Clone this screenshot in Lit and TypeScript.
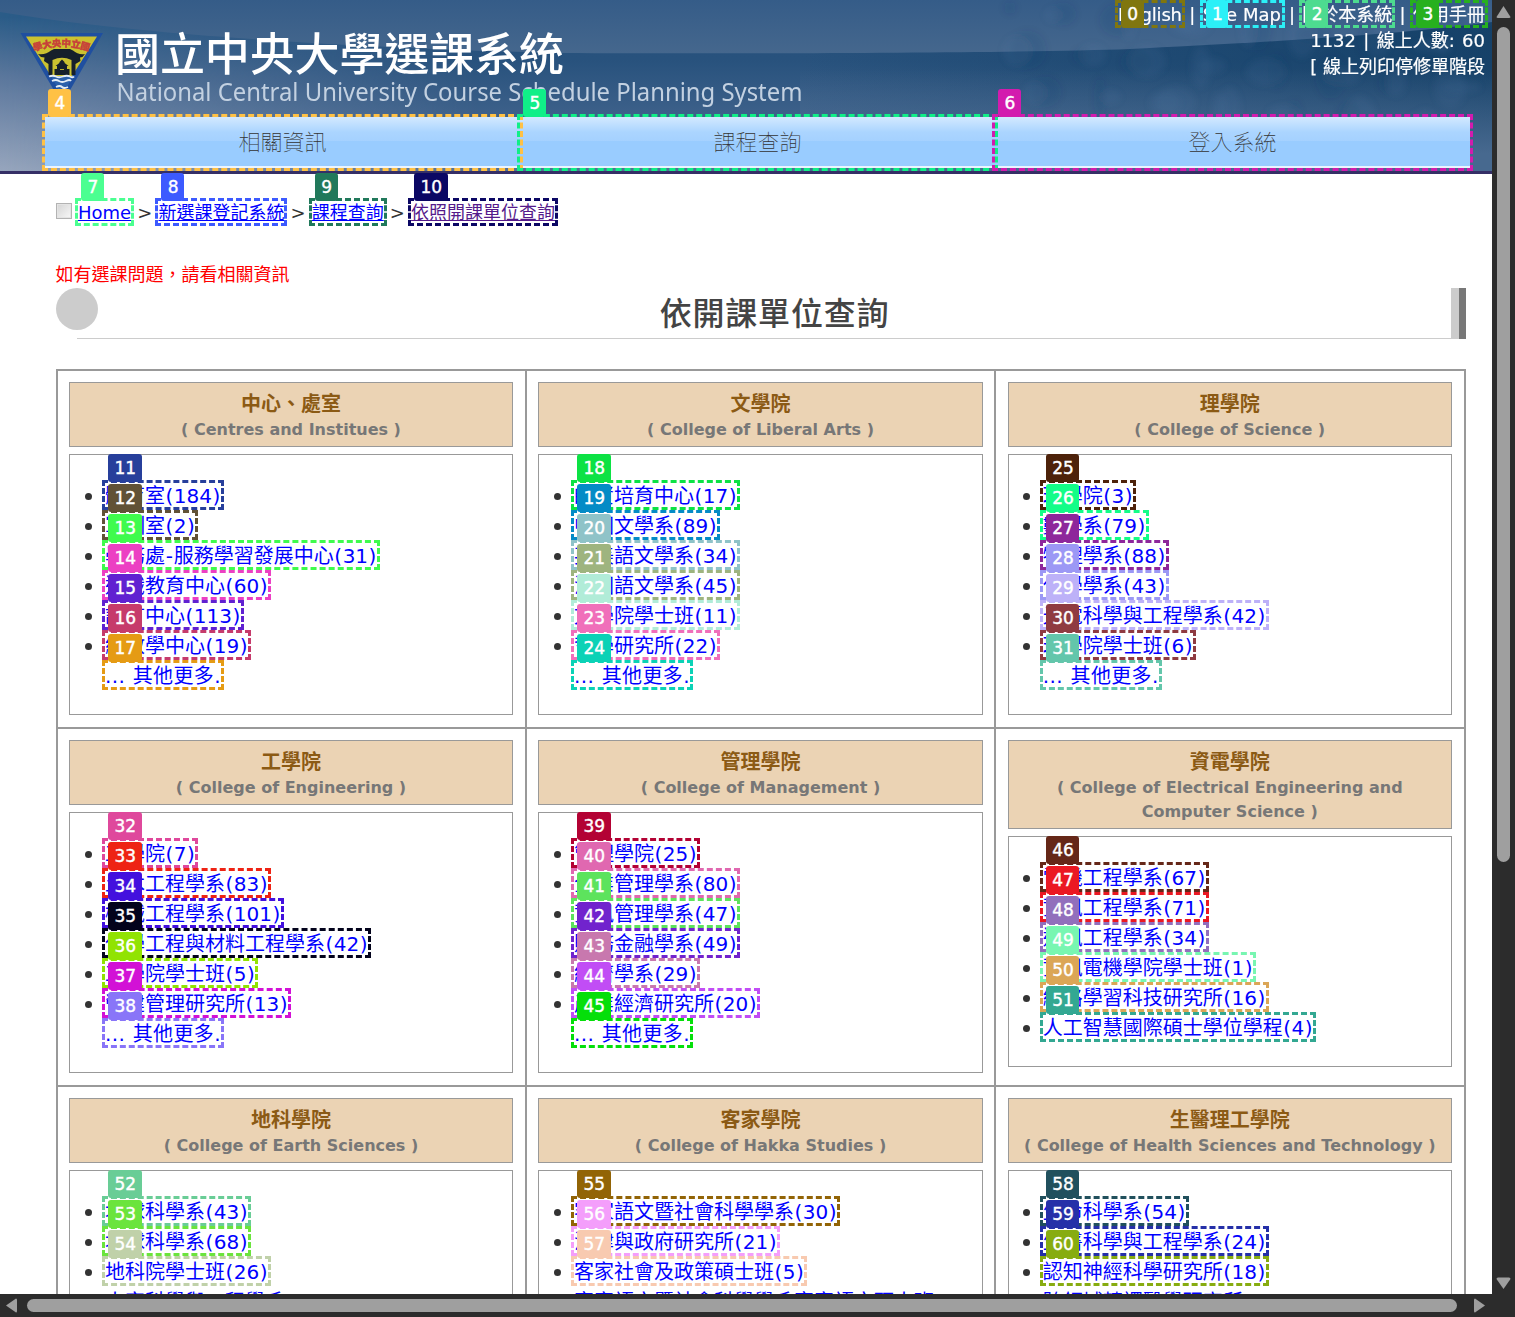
import { LitElement, html, svg, css, nothing } from "lit";
import { customElement, property } from "lit/decorators.js";

interface Entry { name: string; count?: number; color?: string; tag?: number }
interface College { zh: string; en: string; items: Entry[] }

const MORE = "... 其他更多.";

function build(zh: string, en: string, first: number, rows: [string, number | null, string?][]): College {
  return {
    zh,
    en,
    items: rows.map(([name, count, color], i) => ({
      name,
      count: count ?? undefined,
      color,
      tag: color ? first + i : undefined,
    })),
  };
}

const COLLEGES: College[] = [
  build("中心、處室", "( Centres and Institues )", 11, [
    ["體育室", 184, "#273f9b"], ["軍訓室", 2, "#615236"], ["學務處-服務學習發展中心", 31, "#3ffb4d"],
    ["通識教育中心", 60, "#ec40c3"], ["語言中心", 113, "#6021d1"], ["總教學中心", 19, "#c63b6b"], [MORE, null, "#e59b14"],
  ]),
  build("文學院", "( College of Liberal Arts )", 18, [
    ["師資培育中心", 17, "#0ce244"], ["中國文學系", 89, "#048bc6"], ["英美語文學系", 34, "#8fc3c8"],
    ["法國語文學系", 45, "#9eb47f"], ["文學院學士班", 11, "#b1ecd8"], ["哲學研究所", 22, "#f06fba"], [MORE, null, "#0bd2b6"],
  ]),
  build("理學院", "( College of Science )", 25, [
    ["理學院", 3, "#4d220a"], ["數學系", 79, "#13fd88"], ["物理學系", 88, "#8e279b"],
    ["化學學系", 43, "#9c98f5"], ["光電科學與工程學系", 42, "#bdb1f8"], ["理學院學士班", 6, "#8f3b41"], [MORE, null, "#63c6ab"],
  ]),
  build("工學院", "( College of Engineering )", 32, [
    ["工學院", 7, "#df489c"], ["土木工程學系", 83, "#ee2314"], ["機械工程學系", 101, "#4310de"],
    ["化學工程與材料工程學系", 42, "#03031c"], ["工學院學士班", 5, "#91e302"], ["營建管理研究所", 13, "#d211d6"], [MORE, null, "#8975f8"],
  ]),
  build("管理學院", "( College of Management )", 39, [
    ["管理學院", 25, "#b30234"], ["企業管理學系", 80, "#e068b0"], ["資訊管理學系", 47, "#5de35d"],
    ["財務金融學系", 49, "#7123cd"], ["經濟學系", 29, "#c878ae"], ["產業經濟研究所", 20, "#c14df5"], [MORE, null, "#05df0a"],
  ]),
  build("資電學院", "( College of Electrical Engineering and Computer Science )", 46, [
    ["電機工程學系", 67, "#652718"], ["資訊工程學系", 71, "#eb1822"], ["通訊工程學系", 34, "#926fbc"],
    ["資訊電機學院學士班", 1, "#78f6b1"], ["網路學習科技研究所", 16, "#dba656"], ["人工智慧國際碩士學位學程", 4, "#33a892"],
  ]),
  build("地科學院", "( College of Earth Sciences )", 52, [
    ["地球科學系", 43, "#69cd96"], ["地球科學系", 68, "#6be43d"], ["地科院學士班", 26, "#c0d1a9"], ["太空科學與工程學系", 31],
  ]),
  build("客家學院", "( College of Hakka Studies )", 55, [
    ["客家語文暨社會科學學系", 30, "#926406"], ["法律與政府研究所", 21, "#f49efb"], ["客家社會及政策碩士班", 5, "#f8cab0"],
    ["客家語文暨社會科學學系客家語文碩士班", 6],
  ]),
  build("生醫理工學院", "( College of Health Sciences and Technology )", 58, [
    ["生命科學系", 54, "#21505d"], ["生醫科學與工程學系", 24, "#2530a8"], ["認知神經科學研究所", 18, "#87ac10"], ["跨領域轉譯醫學研究所", 4],
  ]),
];

@customElement("marked-link")
class MarkedLink extends LitElement {
  @property() color = "";
  @property() tag = "";

  static styles = css`
    :host { display: inline-block; position: relative; white-space: nowrap; }
    .frame { position: absolute; z-index: 1; inset: -3px; border: 3px dashed; pointer-events: none; }
    .tag {
      position: absolute; z-index: 1; left: 3px; top: var(--tag-top, -29px); height: 28px; padding: 0 5.600px 0 6.400px; box-sizing: border-box;
      border-radius: 3px; color: #fff; font: 17px/28px "DejaVu Sans", sans-serif; -webkit-text-stroke: 0.4px #fff;
    }
  `;

  render() {
    return html`<slot></slot>${this.color
      ? html`<span class="frame" style="border-color:${this.color}"></span><span class="tag" style="background:${this.color}">${this.tag}</span>`
      : nothing}`;
  }
}

@customElement("site-banner")
class SiteBanner extends LitElement {
  static styles = css`
    :host { display: block; position: relative; height: 171px; border-bottom: 3px solid #352f66; overflow: visible; }
    .sky { position: absolute; inset: 0; width: 100%; height: 171px; }
    .layout { position: relative; height: 171px; display: flex; flex-direction: column; }
    .top { height: 117px; display: flex; justify-content: space-between; }
    .brand { width: 830px; height: 117px; flex: none; }
    .meta { padding-right: 7px; color: #fff; font-size: 18px; line-height: 26px; text-align: right; -webkit-text-stroke: 0.2px #fff; }
    .links { display: flex; justify-content: flex-end; align-items: flex-start; height: 28px; box-sizing: border-box; padding-top: 3px; line-height: 23px; --tag-top: -3px; }
    .links marked-link { height: 22px; }
    .sep { width: 20.700px; text-align: center; }
    .en { width: 64px; text-align: left; letter-spacing: -0.15px; }
    .map { width: 79px; text-align: left; }
    .nav { display: grid; grid-template-columns: repeat(3, 475px); margin-left: 45px; height: 51px; --tag-top: -28px; }
    .tab {
      height: 51px; display: flex; align-items: center; justify-content: center; box-sizing: border-box;
      font: 100 22px "Noto Sans CJK TC", sans-serif; color: #333; border-bottom: 2px solid #eaf4ff;
      background: linear-gradient(#d3e9ff, #abd5ff 15px, #a5d1ff 24px, #99ccff 24px, #99ccff);
    }
    .tab span { padding-bottom: 4px; }
    .info { display: block; height: 26px; white-space: nowrap; }
    .count { word-spacing: 1.600px; }
  `;

  sky() {
    const leaves = Array.from({ length: 46 }, (_, i) => {
      const x = 1010 + ((i * 83) % 480);
      const y = 8 + ((i * 47) % 120);
      return svg`<ellipse cx=${x} cy=${y} rx=${6 + ((i * 7) % 15)} ry=${6 + ((i * 5) % 17)} fill=${i % 3 ? "#5a83ae" : "#173f63"} opacity="0.11" />`;
    });
    return html`<svg class="sky" viewBox="0 0 1492 171" preserveAspectRatio="none" aria-hidden="true">
      <defs>
        <linearGradient id="base" x1="0" y1="0" x2="0" y2="1">
          <stop offset="0" stop-color="#24507c" /><stop offset="0.35" stop-color="#28527d" /><stop offset="1" stop-color="#526f97" />
        </linearGradient>
        <linearGradient id="cap" x1="0" y1="0" x2="0" y2="1">
          <stop offset="0" stop-color="#355c88" /><stop offset="1" stop-color="#45678d" />
        </linearGradient>
        <linearGradient id="left" x1="0" y1="0" x2="0" y2="1">
          <stop offset="0.1" stop-color="#2b5c88" /><stop offset="0.45" stop-color="#5b779c" /><stop offset="1" stop-color="#97a6bd" />
        </linearGradient>
        <linearGradient id="fade" x1="0" y1="0" x2="1" y2="0">
          <stop offset="0" stop-color="#fff" /><stop offset="1" stop-color="#000" />
        </linearGradient>
        <linearGradient id="dark" x1="0" y1="0" x2="1" y2="0">
          <stop offset="0" stop-color="#103c62" stop-opacity="0" /><stop offset="1" stop-color="#103c62" stop-opacity="0.75" />
        </linearGradient>
        <linearGradient id="lift" x1="0" y1="0" x2="0" y2="1">
          <stop offset="0.4" stop-color="#47698f" stop-opacity="0" /><stop offset="0.9" stop-color="#47698f" />
        </linearGradient>
        <mask id="m"><rect width="480" height="171" fill="url(#fade)" /></mask>
        <filter id="b"><feGaussianBlur stdDeviation="3" /></filter>
      </defs>
      <rect width="1492" height="171" fill="url(#base)" />
      <rect width="480" height="171" fill="url(#left)" mask="url(#m)" />
      <rect x="800" width="692" height="171" fill="url(#dark)" />
      <rect x="800" width="692" height="171" fill="url(#lift)" />
      <path d="M0 0H1492V22C1390 36 1230 44 1130 49C1020 53 760 54 560 53C350 48 130 34 0 12Z" fill="url(#cap)" />
      <g filter="url(#b)">${leaves}</g>
    </svg>`;
  }

  brand() {
    return html`<svg class="brand" viewBox="0 0 830 117">
      <defs><path id="arc" d="M34 51.500Q62 42 90 51.500" /></defs>
      <path d="M20.500 33H103L62 104Z" fill="#1f4fa0" />
      <path d="M26 36.500H97L72 76H51Z" fill="#cbc230" />
      <path d="M51 76H73L62 96Z" fill="#2c61ab" />
      <text font-size="9.500" font-weight="900" fill="#c7403a" stroke="#c7403a" stroke-width="0.400" font-family="Noto Sans CJK TC, sans-serif"><textPath href="#arc" textLength="56">學大央中立國</textPath></text>
      <path d="M38 54Q46 55 51 50.500L54 49H70L73 50.500Q78 55 85 54L82.500 57L80 57.500L80.500 61L75.500 64V75H71.500V60Q62 55.500 52.500 60V75H48.500V64L44 61L44.500 57.500L41 57Z" fill="#16202b" />
      <path d="M62 59.500L65 62.500H64L68.500 66H67V69H69.500V75H54.500V69H57V66H55.500L60 62.500H59Z" fill="#16202b" />
      <path d="M60 69.500h4" stroke="#cbc230" stroke-width="0.900" />
      <path d="M49 76.500q4-1.500 7 0t7 0 7 0 4 0M52 81q4-2 7 0t7 0 5 0M56 87q4-2 6 0t6 0" fill="none" stroke="#e5edf6" stroke-width="1.800" />
      <text x="115" y="71" textLength="449" font-size="45" font-weight="500" fill="#fff" font-family="Noto Sans CJK TC, sans-serif">國立中央大學選課系統</text>
      <text x="116.500" y="101" textLength="686" font-size="25" fill="#c3d1e1" lengthAdjust="spacingAndGlyphs" font-family="Noto Sans, sans-serif">National Central University Course Schedule Planning System</text>
    </svg>`;
  }

  render() {
    return html`${this.sky()}
      <div class="layout">
        <div class="top">
          ${this.brand()}
          <div class="meta">
            <div class="links">
              <marked-link class="en" color="#80760f" tag="0">English</marked-link><span class="sep">|</span>
              <marked-link class="map" color="#2bf0f7" tag="1">Site Map</marked-link><span class="sep">|</span>
              <marked-link color="#4ddb90" tag="2">關於本系統</marked-link><span class="sep">|</span>
              <marked-link color="#27b01f" tag="3">使用手冊</marked-link>
            </div>
            <span class="info count">1132 | 線上人數: 60</span>
            <span class="info">[ 線上列印停修單階段</span>
          </div>
        </div>
        <div class="nav">
          <marked-link color="#ffc145" tag="4"><div class="tab"><span>相關資訊</span></div></marked-link>
          <marked-link color="#10ef88" tag="5"><div class="tab"><span>課程查詢</span></div></marked-link>
          <marked-link color="#d31bae" tag="6"><div class="tab"><span>登入系統</span></div></marked-link>
        </div>
      </div>`;
  }
}

@customElement("college-card")
class CollegeCard extends LitElement {
  @property({ attribute: false }) data!: College;

  static styles = css`
    :host { display: flex; flex-direction: column; padding: 11px 12px 12px 11px; box-sizing: border-box; height: 358px;
      border-right: 2px solid #999; border-bottom: 2px solid #999; }
    :host(:nth-child(3n + 2)) { padding-right: 11px; }
    :host(:nth-child(3n)) { padding-left: 11.500px; }
    :host(:nth-child(3n)) .body { padding-left: 14.300px; }
    .head { border: 1px solid #999; background: #ebd3b4; padding: 9px 12px 4px; text-align: center; font-weight: bold; }
    .zh { color: #8b5a14; font-size: 20px; line-height: 24px; margin-bottom: 2px; }
    .en { color: #777; font-size: 16px; line-height: 24px; }
    .body { margin-top: 7px; border: 1px solid #999; padding: 25px 0 24px 15px; }
    .row { display: flex; height: 30px; padding: 3px 0; box-sizing: border-box; font-size: 20px; line-height: 26px; color: #00f; }
    .row marked-link { height: 24px; }
    .dot { width: 7px; height: 7px; border-radius: 50%; background: #333; margin: 10px 13px 0 0; flex: none; }
    .dot.off { visibility: hidden; }
    .paren { padding: 0 0.500px; }
    .hyphen { padding: 0 0.800px; }
    .more { word-spacing: 0.900px; letter-spacing: 0.350px; }
  `;

  name(text: string) {
    const [head, ...rest] = text.split("-");
    return html`${head}${rest.map((r) => html`<span class="hyphen">-</span>${r}`)}`;
  }

  row(e: Entry) {
    const more = e.count === undefined;
    return html`<div class="row">
      <span class="dot ${more ? "off" : ""}"></span>
      <marked-link .color=${e.color ?? ""} .tag=${String(e.tag ?? "")}>${more
        ? html`<span class="more">${e.name}</span>`
        : html`${this.name(e.name)}<span class="paren">(</span>${e.count}<span class="paren">)</span>`}</marked-link>
    </div>`;
  }

  render() {
    return html`<div class="head"><div class="zh">${this.data.zh}</div><div class="en">${this.data.en}</div></div>
      <div class="body">${this.data.items.map((e) => this.row(e))}</div>`;
  }
}

@customElement("app-root")
class AppRoot extends LitElement {
  static styles = css`
    :host {
      display: grid; grid-template-columns: 1fr 23px; grid-template-rows: 1fr 23px; width: 1515px; height: 1317px; overflow: hidden;
      background: #2c2c2c; font-family: "DejaVu Sans", "Noto Sans CJK TC", sans-serif; color: #333;
    }
    .page { background: #fff; overflow: hidden; min-width: 0; min-height: 0; }
    .main { padding: 27px 26px 0 56px; }
    .crumbs { display: flex; height: 22px; line-height: 24px; font-size: 18px; color: #00f; --tag-top: -28px; }
    .crumbs marked-link { text-decoration: underline; height: 22px; }
    .check { width: 16px; height: 16px; margin: 2px 6px 0 0; box-sizing: border-box; border: 1px solid #b3b3b3; background: linear-gradient(135deg, #d4d4d4, #f8f8f8); box-shadow: inset 0 0 0 1px #e4e4e4; }
    .gt { width: 27.300px; text-align: center; color: #333; }
    .visited { color: #551a8b; }
    .note { margin: 40px 0 0 -0.500px; height: 22px; line-height: 24px; font-size: 18px; color: red; }
    .title { display: flex; margin-top: 3px; height: 51px; }
    .disc { width: 42px; height: 42px; border-radius: 50%; background: #ccc; margin-right: -21px; }
    .name { flex: 1; box-sizing: border-box; height: 51px; border-bottom: 1px solid #ccc; text-align: center; font-size: 32px; line-height: 47px; letter-spacing: 0.800px; font-weight: 500; padding-left: 21px; color: #444; font-family: "Noto Sans CJK TC", sans-serif; }
    .bar { width: 8px; background: #ccc; }
    .bar.deep { width: 7px; background: #777; }
    .table { display: grid; grid-template-columns: 469px 469px 470px; margin-top: 30px; border-left: 2px solid #999; border-top: 2px solid #999; }
    .vbar, .hbar { display: flex; align-items: center; justify-content: space-between; }
    .vbar { flex-direction: column; padding: 5px 0 4px; }
    .hbar { padding: 0 6px 0 5px; }
    .vthumb { width: 13px; height: 835px; border-radius: 7px; background: #9f9f9f; margin: 9px 0 auto; }
    .hthumb { width: 1430px; height: 13px; border-radius: 7px; background: #9f9f9f; margin: 0 auto 0 9px; }
    .tri { fill: #9f9f9f; flex: none; }
  `;

  render() {
    return html`
      <div class="page">
        <site-banner></site-banner>
        <div class="main">
          <div class="crumbs">
            <span class="check"></span>
            <marked-link color="#4bff91" tag="7">Home</marked-link><span class="gt">&gt;</span>
            <marked-link color="#3c5aff" tag="8">新選課登記系統</marked-link><span class="gt">&gt;</span>
            <marked-link color="#21795b" tag="9">課程查詢</marked-link><span class="gt">&gt;</span>
            <marked-link class="visited" color="#0b0764" tag="10">依照開課單位查詢</marked-link>
          </div>
          <div class="note">如有選課問題，請看相關資訊</div>
          <div class="title">
            <span class="disc"></span>
            <div class="name">依開課單位查詢</div>
            <span class="bar"></span><span class="bar deep"></span>
          </div>
          <div class="table">${COLLEGES.map((c) => html`<college-card .data=${c}></college-card>`)}</div>
        </div>
      </div>
      <div class="vbar">
        <svg class="tri" width="15" height="13"><path d="M7.500 1L14.500 12Q14.500 13 13 13H2Q0.500 13 0.500 12Z" /></svg>
        <div class="vthumb"></div>
        <svg class="tri" width="15" height="13"><path d="M7.500 12L14.500 2Q14.500 0.500 13 0.500H2Q0.500 0.500 0.500 2Z" /></svg>
      </div>
      <div class="hbar">
        <svg class="tri" width="13" height="15"><path d="M1 7.500L11 0.500Q12 0.500 12 2V13Q12 14.500 11 14.500Z" /></svg>
        <div class="hthumb"></div>
        <svg class="tri" width="13" height="15"><path d="M12 7.500L2 0.500Q1 0.500 1 2V13Q1 14.500 2 14.500Z" /></svg>
      </div>
    `;
  }
}
